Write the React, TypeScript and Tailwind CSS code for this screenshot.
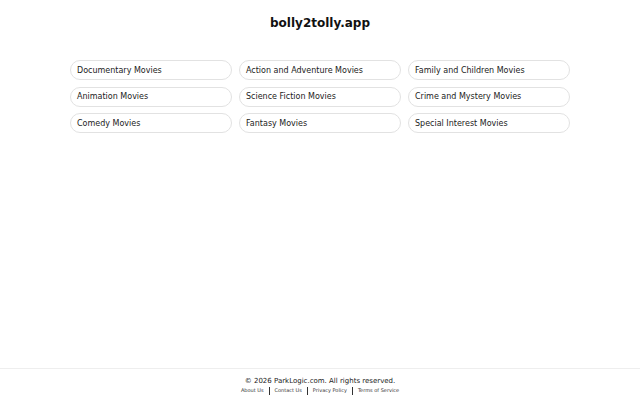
import React from "react";

const items = [
  "Documentary Movies",
  "Action and Adventure Movies",
  "Family and Children Movies",
  "Animation Movies",
  "Science Fiction Movies",
  "Crime and Mystery Movies",
  "Comedy Movies",
  "Fantasy Movies",
  "Special Interest Movies",
];

const links = ["About Us", "Contact Us", "Privacy Policy", "Terms of Service"];

export default function App() {
  return (
    <div className="flex min-h-[400px] flex-col bg-white font-['DejaVu_Sans',sans-serif] text-[#222222]">
      <main className="flex-1">
        <h1 className="pt-[15px] text-center text-[12px] font-bold leading-[16px] text-[#111111]">
          bolly2tolly.app
        </h1>
        <div className="mx-auto mt-[29px] grid w-[500px] grid-cols-3 gap-x-[7px] gap-y-[6.5px]">
          {items.map((t) => (
            <a
              key={t}
              href="#"
              className="flex h-[20px] items-center rounded-full border border-[#e2e2e2] px-[6px] pt-px text-[8px] text-[#222222]"
            >
              {t}
            </a>
          ))}
        </div>
      </main>
      <footer className="flex h-[32px] flex-col items-center border-t border-[#eeeeee] pt-[7px]">
        <div className="text-[7px] leading-[10px] text-[#222222]">
          © 2026 ParkLogic.com. All rights reserved.
        </div>
        <div className="flex items-center text-[5px] leading-[9px] text-[#333333]">
          {links.map((l, i) => (
            <React.Fragment key={l}>
              {i > 0 && <span className="mx-[5px] h-[8px] w-px bg-[#333333]" />}
              <a href="#">{l}</a>
            </React.Fragment>
          ))}
        </div>
      </footer>
    </div>
  );
}
